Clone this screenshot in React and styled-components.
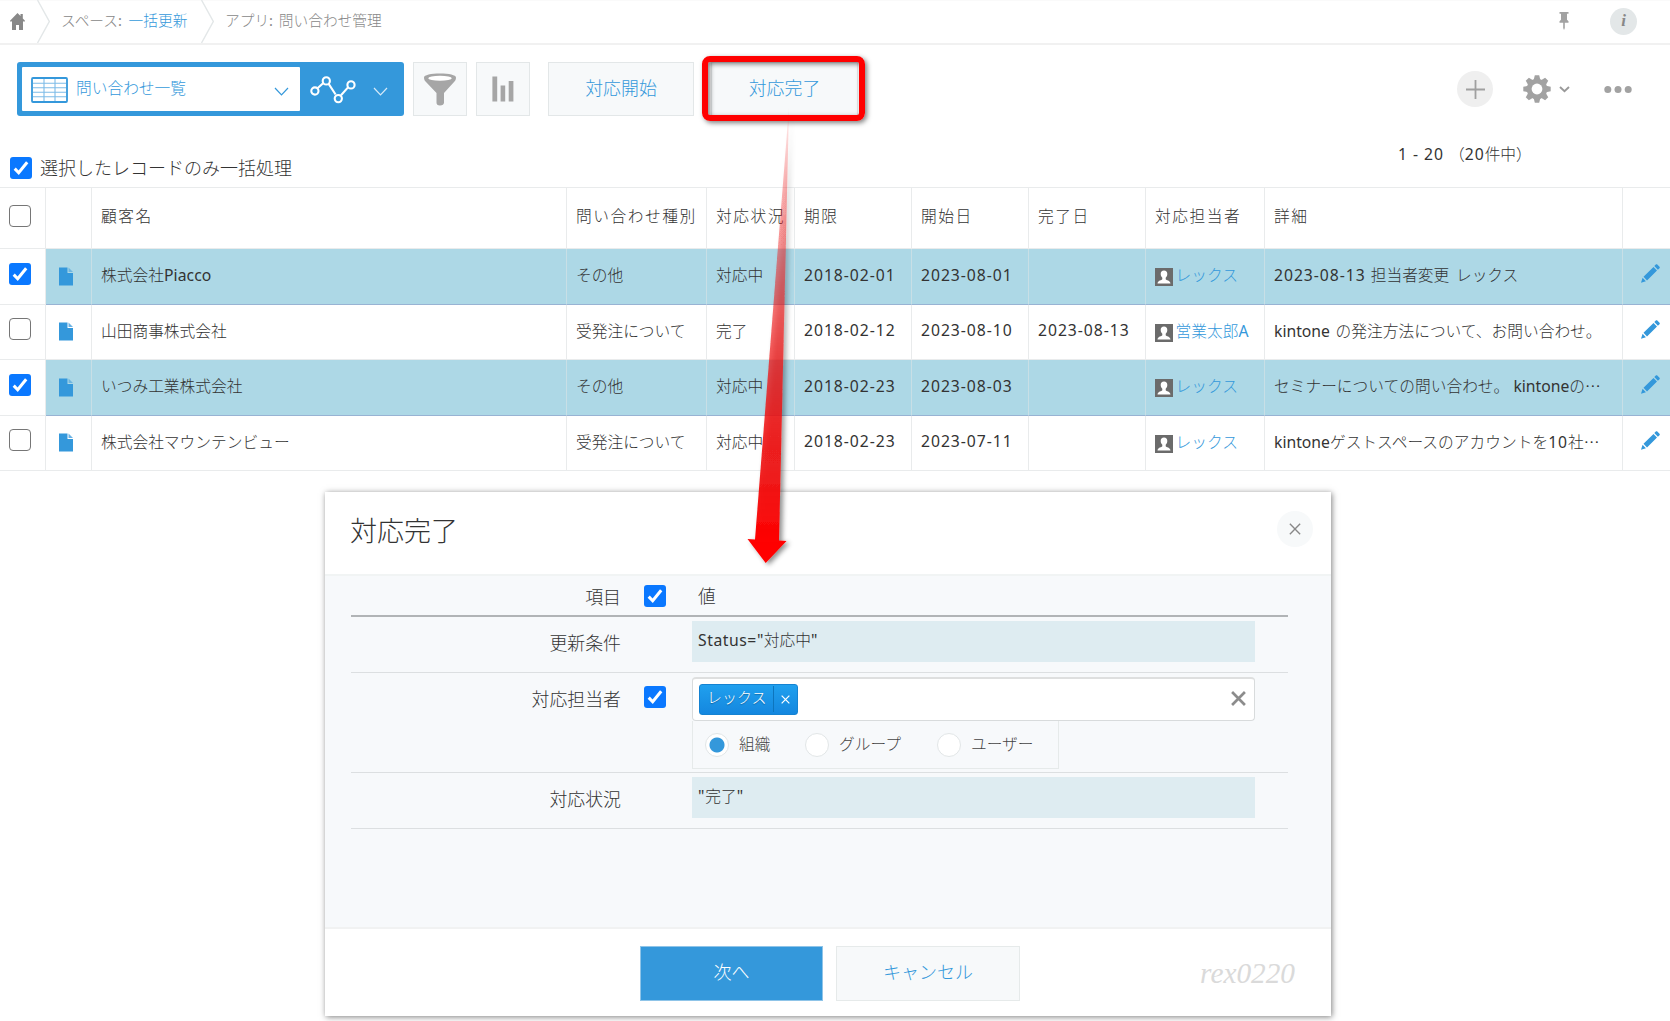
import React from "react";
import styled, { createGlobalStyle, css } from "styled-components";

const BLUE = "#3498db";
const LINE = "#e9ebec";

const GlobalStyle = createGlobalStyle`
  *, *::before, *::after { box-sizing: border-box; }
  body {
    margin: 0;
    background: #fff;
    color: #333;
    font-family: "Noto Sans", "Noto Sans CJK JP", sans-serif;
    font-size: 15.72px;
    font-weight: 300;
    overflow: hidden;
  }
  button { font: inherit; margin: 0; padding: 0; cursor: pointer; }
  svg { display: block; flex: none; }
`;

const Page = styled.div`
  position: relative;
  width: 1670px;
  height: 1021px;
  overflow: hidden;
  white-space: nowrap;
`;

const TopBar = styled.header`
  display: flex;
  align-items: center;
  justify-content: space-between;
  height: 45px;
  padding: 0 33px 2px 10px;
  border-top: 1px solid #fafafa;
  border-bottom: 2px solid #f1f1f1;
`;
const Crumbs = styled.nav`
  display: flex;
  align-items: center;
  height: 42px;
  color: #888;
  font-size: 14.7px;
`;
const Crumb = styled.span`
  width: ${(p) => p.$w}px;
  padding-left: ${(p) => p.$pad}px;
  padding-bottom: 4px;
`;
const CrumbLink = styled.a`
  color: ${BLUE};
`;
const TopIcons = styled.div`
  display: flex;
  align-items: center;
  gap: 41px;
`;
const InfoBadge = styled.span`
  width: 27px;
  height: 27px;
  border-radius: 50%;
  background: #e3e7e8;
  color: #888;
  font: italic bold 17px/25px "Liberation Serif", serif;
  text-align: center;
`;

const Toolbar = styled.div`
  display: flex;
  align-items: flex-start;
  height: 89px;
  padding: 17px 37px 0 17px;
`;
const ViewSelector = styled.div`
  display: flex;
  width: 387px;
  height: 54px;
  padding: 5px;
  border-radius: 3px;
  background: ${BLUE};
`;
const ViewName = styled.div`
  display: flex;
  align-items: center;
  width: 278px;
  padding: 0 11px 0 9px;
  background: #fff;
  color: ${BLUE};
  border-radius: 1px;
  span { flex: 1; margin-left: 8px; padding-bottom: 3px; }
  svg:first-child { margin-top: 2px; }
  svg:last-child { margin-top: 4px; }
`;
const GraphPicker = styled.div`
  display: flex;
  align-items: center;
  justify-content: space-between;
  flex: 1;
  padding: 2px 11px 0 10px;
  svg:last-child { margin-top: 2px; }
`;
const ToolButton = styled.button`
  display: flex;
  align-items: center;
  justify-content: center;
  width: ${(p) => p.$w}px;
  height: 54px;
  margin-left: ${(p) => p.$gap}px;
  padding-bottom: ${(p) => (p.$text ? 5 : 0)}px;
  background: #f7f9fa;
  border: 1px solid #e3e7e8;
  color: ${BLUE};
  font-size: 17.9px;
`;
const ToolRight = styled.div`
  display: flex;
  align-items: center;
  height: 54px;
  margin-left: auto;
`;
const AddButton = styled.button`
  display: flex;
  align-items: center;
  justify-content: center;
  width: 36px;
  height: 36px;
  margin-right: 30px;
  border: 0;
  border-radius: 50%;
  background: #efefef;
`;
const MoreButton = styled.span`
  margin-left: 14px;
`;

const ListHead = styled.div`
  display: flex;
  justify-content: space-between;
  height: 53px;
  padding: 0 144px 0 10px;
`;
const SelectOnly = styled.label`
  display: flex;
  align-items: center;
  gap: 8px;
  height: 26px;
  margin-top: 21px;
  font-size: 18px;
  & > b { font-weight: 300; padding-bottom: 2px; }
`;
const Count = styled.div`
  width: 128px;
  margin-top: 9px;
  line-height: 22px;
`;
const Latin = styled.span`
  font-weight: 400;
  letter-spacing: ${(p) => p.$ls ?? 0}px;
`;
const Dots = styled.span`
  font-family: "Noto Sans CJK JP", sans-serif;
  line-height: 1;
`;

const Box = styled.span`
  display: flex;
  align-items: center;
  justify-content: center;
  flex: none;
  width: 22px;
  height: 22px;
  border-radius: 3px;
  background: #0a78ff;
  ${(p) => !p.$on && css`
    background: #fff;
    border: 1.5px solid #767676;
    border-radius: 4px;
  `}
`;

const rowGrid = css`
  display: grid;
  grid-template-columns: 46px 46px 475px 140px 88px 117px 117px 117px 119px 358px 47px;
`;
const Grid = styled.section`
  border-top: 1px solid ${LINE};
`;
const HeadRow = styled.div`
  ${rowGrid}
  height: 61px;
`;
const Row = styled.div`
  ${rowGrid}
  height: 55.5px;
`;
const Cell = styled.div`
  display: flex;
  align-items: center;
  min-width: 0;
  padding: 0 0 3px 9px;
  border-right: 1px solid ${LINE};
  border-bottom: 1px solid ${LINE};
  &:last-child { border-right: 0; }
  ${(p) => p.$on && css`
    background: #add8e6;
    border-right-color: #c8dfe6;
    border-bottom-color: #98b3d3;
  `}
  ${(p) => p.$head && css`letter-spacing: 1.55px; padding-bottom: 6px;`}
  ${(p) => p.$icon && css`justify-content: center; padding: 0 6px 0 0;`}
  ${(p) => p.$check && css`padding-bottom: 5px;`}
  ${(p) => p.$edit && css`padding: 0 0 5px 7px;`}
`;
const UserLink = styled.a`
  display: flex;
  align-items: center;
  gap: 3px;
  color: ${BLUE};
  svg { margin: 5px 0 0 -0.5px; }
`;

const Dialog = styled.section`
  position: absolute;
  left: 325px;
  top: 492px;
  width: 1006px;
  height: 524px;
  background: #fff;
  box-shadow: 1px 1px 6px rgba(0, 0, 0, 0.5);
`;
const DialogHead = styled.div`
  display: flex;
  justify-content: space-between;
  align-items: center;
  height: 82px;
  padding: 0 18px 8px 25px;
`;
const Title = styled.h2`
  margin: 0;
  font-size: 27px;
  font-weight: 300;
`;
const CloseButton = styled.button`
  display: flex;
  align-items: center;
  justify-content: center;
  width: 36px;
  height: 36px;
  border: 0;
  border-radius: 50%;
  background: #f7f9fa;
`;
const DialogBody = styled.div`
  height: 355px;
  padding: 0 43px 0 26px;
  background: #f7f9fb;
  border-top: 2px solid #f1f4f4;
  border-bottom: 2px solid #f1f2f2;
`;
const Field = styled.div`
  display: grid;
  grid-template-columns: 270px 71px 563px;
  height: ${(p) => p.$h}px;
  border-bottom: ${(p) => (p.$strong ? "2px solid #b1b4b6" : "1px solid #dcdfe1")};
`;
const FieldLabel = styled.div`
  height: 26px;
  margin-top: ${(p) => p.$top}px;
  font-size: 17.9px;
  line-height: 26px;
  text-align: right;
`;
const FieldCheck = styled.div`
  padding: ${(p) => p.$top}px 0 0 23px;
`;
const FieldValue = styled.div`
  padding-top: ${(p) => p.$top}px;
`;
const ReadOnly = styled.div`
  height: 41px;
  padding: 0 6px;
  background: #deecf1;
  line-height: 39px;
`;
const ValueHead = styled.div`
  padding-left: 6px;
  font-size: 17.7px;
  line-height: 26px;
`;
const TagInput = styled.div`
  display: flex;
  align-items: flex-start;
  justify-content: space-between;
  height: 44px;
  padding: 5px 8px 0 6px;
  border: 1px solid #d8dbdc;
  border-top: 2px solid #dedfdf;
  border-radius: 4px;
  background: #fff;
  & > svg { margin-top: 7px; }
`;
const Tag = styled.span`
  display: flex;
  align-items: stretch;
  width: 99px;
  height: 31px;
  border: 1px solid #1583d2;
  border-radius: 3px;
  background: linear-gradient(#20a0ee, #1487df);
  color: #fff;
  line-height: 25px;
  text-shadow: 0 1px 1px rgba(0, 0, 0, 0.3);
`;
const TagName = styled.span`
  width: 73px;
  padding-left: 7px;
  font-size: 15px;
`;
const TagRemove = styled.span`
  display: flex;
  flex: 1;
  align-items: center;
  justify-content: center;
  margin: 1px 0 2px;
  border-left: 1px solid #0d75bd;
`;
const RadioPanel = styled.div`
  display: flex;
  align-items: center;
  width: 367px;
  height: 48px;
  padding-left: 12px;
  border: 1px solid #e6eaea;
  border-top: 0;
`;
const RadioItem = styled.label`
  display: flex;
  align-items: center;
  gap: 10px;
  width: ${(p) => p.$w}px;
  color: #444;
  span { padding-bottom: 3px; }
`;
const Dot = styled.i`
  width: 24px;
  height: 24px;
  border: 1px solid #e2e6e7;
  border-radius: 50%;
  background: ${(p) => (p.$on ? `radial-gradient(circle, ${BLUE} 7px, #fff 8px)` : "#fff")};
`;
const DialogFoot = styled.div`
  display: flex;
  align-items: flex-start;
  height: 87px;
  padding: 17px 36px 0 315px;
`;
const FootButton = styled.button`
  width: ${(p) => p.$w}px;
  height: 55px;
  margin-right: 13px;
  padding-bottom: 5px;
  border: 1px solid ${(p) => (p.$primary ? "#8fc4e8" : "#e6eaea")};
  background: ${(p) => (p.$primary ? BLUE : "#f7f9fa")};
  color: ${(p) => (p.$primary ? "#fff" : BLUE)};
  font-size: 18px;
`;
const Signature = styled.span`
  margin-left: auto;
  padding-top: 10px;
  color: #dadada;
  font: italic 29.3px/34px "Liberation Serif", serif;
`;

const Callout = styled.div`
  position: absolute;
  left: 702px;
  top: 56px;
  width: 163px;
  height: 65px;
  border: 6px solid #f00;
  border-radius: 8px;
  box-shadow: 2px 2px 5px rgba(0, 0, 0, 0.5), inset 2px 2px 5px rgba(0, 0, 0, 0.5);
`;
const ArrowLayer = styled.svg`
  position: absolute;
  left: 735px;
  top: 95px;
`;

const Check = ({ on }) => (
  <Box $on={on}>
    {on && (
      <svg width="18" height="18" viewBox="0 0 18 18">
        <path d="M2.7 9.6 6.7 13.8 15.2 3.2" fill="none" stroke="#fff" strokeWidth="3" />
      </svg>
    )}
  </Box>
);
const Chevron = ({ color }) => (
  <svg width="15" height="9" viewBox="0 0 15 9">
    <path d="M1 1 7.5 7.8 14 1" fill="none" stroke={color} strokeWidth="1.2" />
  </svg>
);
const Separator = () => (
  <svg width="13" height="43" viewBox="0 0 13 43">
    <path d="M.5 0 12.3 21.5.5 43" fill="none" stroke="#e3e7e8" strokeWidth="1.4" />
  </svg>
);
const Cross = ({ size, width, color }) => (
  <svg width={size} height={size} viewBox="0 0 14 14">
    <path d="M1 1 13 13M13 1 1 13" stroke={color} strokeWidth={width} />
  </svg>
);
const HomeIcon = () => (
  <svg width="15" height="17" viewBox="0 0 15 17">
    <path d="M7.5 0 0 7.8.9 9 2 8v9h4v-5h3v5h4V8l1.1 1 .9-1.2-2.2-2.3V1h-2.3v2.1z" fill="#888" />
  </svg>
);
const PinIcon = () => (
  <svg width="10" height="18" viewBox="0 0 10 18">
    <path d="M.5 0h9v1.7H8v6l1.500 1.600v1.400H5.800V16L5 18l-.8-2v-5.300H.5V9.300L2 7.700v-6H.5z" fill="#a2a2a2" />
  </svg>
);
const ListIcon = () => (
  <svg width="37" height="26" viewBox="0 0 37 26">
    <rect x="1" y="1" width="35" height="24" rx="1" fill="#fff" stroke={BLUE} strokeWidth="1.8" />
    <path d="M2 6.2h33M2 10.7h33M2 15.2h33M2 19.7h33M13 2v22M24 2v22" stroke="#7dbce8" strokeWidth="1.1" />
  </svg>
);
const GraphIcon = () => (
  <svg width="46" height="28" viewBox="0 0 46 28">
    <g fill="none" stroke="#fff" strokeWidth="2.1">
      <path d="m7.500 12.300 5.600-5M18.500 7.600l7.100 10.900M31 19.200l7-7.800" />
      <circle cx="4.900" cy="15" r="3.600" />
      <circle cx="16.300" cy="4.900" r="3.600" />
      <circle cx="28.300" cy="22.600" r="3.600" />
      <circle cx="41" cy="8.900" r="3.600" />
    </g>
  </svg>
);
const FilterIcon = () => (
  <svg width="32" height="33" viewBox="0 0 32 33">
    <path d="M0 4.500C0 2 7 .5 16 .5s16 1.500 16 4c0 1.500-.4 2.800-1.300 3.700L20 20v9.500c0 1.800-1.500 3-4 3s-3.500-1.200-3.500-3V20L1.300 8.200C.4 7.300 0 6 0 4.500z" fill="#a6a6a6" />
    <ellipse cx="16" cy="5.200" rx="11.800" ry="2.500" fill="#fff" />
  </svg>
);
const BarsIcon = () => (
  <svg width="22" height="26" viewBox="0 0 22 26">
    <path d="M.4 .5h4.800v25H.4zM8.600 9.500h4.600v16H8.600zM16.700 4.900h4.700v20.600h-4.700z" fill="#a6a6a6" />
  </svg>
);
const GearIcon = () => (
  <svg width="28" height="28" viewBox="-14 -14 28 28">
    <g fill="#a2a2a2">
      {[0, 45, 90, 135, 180, 225, 270, 315].map((a) => (
        <path key={a} d="M-3.600 -8 -2.200 -13.700h4.400L3.600 -8z" transform={`rotate(${a})`} />
      ))}
      <circle r="10.300" />
    </g>
    <circle r="5.400" fill="#fff" />
  </svg>
);
const FileIcon = ({ on }) => (
  <svg width="14" height="19" viewBox="0 0 14 19">
    <path d="M0 .5h8.500V6H14v12.500H0z" fill={BLUE} />
    <path d="M9.500 .5 14 5H9.500z" fill={on ? "#6fb6df" : "#6bb2e4"} />
  </svg>
);
const UserIcon = () => (
  <svg width="18" height="18" viewBox="0 0 18 18">
    <rect width="18" height="18" fill="#6b6b6b" />
    <path d="M9 2.500c2.200 0 3.300 1.500 3.300 3.500 0 1.700-.8 3-1.600 3.800v1.500c.3 1 4.600 1.200 4.800 4.200h-13c.2-3 4.500-3.200 4.800-4.200V9.800C6.500 9 5.700 7.700 5.700 6c0-2 1.100-3.500 3.300-3.500z" fill="#fff" />
  </svg>
);
const PencilIcon = () => (
  <svg width="19" height="19" viewBox="0 0 19 19">
    <path d="M0 18.700 1.600 13.800 4.900 17.200zM2.500 12.700 12.500 2.900l3.500 3.600-10 9.900zM13.300 2 14.800.5c.5-.5 1-.5 1.500 0l2.200 2.300c.5.500.5 1 0 1.500L16.900 5.700z" fill={BLUE} />
  </svg>
);

const D = ({ children }) => <Latin $ls={0.96}>{children}</Latin>;
const L = ({ children }) => <Latin>{children}</Latin>;

const headers = ["顧客名", "問い合わせ種別", "対応状況", "期限", "開始日", "完了日", "対応担当者", "詳細"];
const records = [
  { id: 1, on: true, name: <>株式会社<Latin $ls={0.1}>Piacco</Latin></>, kind: "その他", status: "対応中", due: "2018-02-01", start: "2023-08-01", end: "", user: "レックス", note: <><D>2023-08-13 </D>担当者変更<D> </D>&#8202;レックス</> },
  { id: 2, on: false, name: "山田商事株式会社", kind: "受発注について", status: "完了", due: "2018-02-12", start: "2023-08-10", end: "2023-08-13", user: <span>営業太郎<L>A</L></span>, note: <><L>kintone </L>&#8202;の発注方法について、お問い合わせ。</> },
  { id: 3, on: true, name: "いつみ工業株式会社", kind: "その他", status: "対応中", due: "2018-02-23", start: "2023-08-03", end: "", user: "レックス", note: <>セミナーについての問い合わせ。 <L>kintone</L>の<Dots>…</Dots></> },
  { id: 4, on: false, name: "株式会社マウンテンビュー", kind: "受発注について", status: "対応中", due: "2018-02-23", start: "2023-07-11", end: "", user: "レックス", note: <><L>kintone</L>ゲストスペースのアカウントを<D>10</D>社<Dots>…</Dots></> },
];

export default function App() {
  return (
    <Page>
      <GlobalStyle />
      <TopBar>
        <Crumbs>
          <HomeIcon />
          <Crumb $w={12} $pad={0} />
          <Separator />
          <Crumb $w={151} $pad={11}>
            スペース<Latin $ls={1.4}>: </Latin><CrumbLink>一括更新</CrumbLink>
          </Crumb>
          <Separator />
          <Crumb $w={180} $pad={11}>アプリ<Latin $ls={1}>: </Latin>問い合わせ管理</Crumb>
        </Crumbs>
        <TopIcons>
          <PinIcon />
          <InfoBadge>i</InfoBadge>
        </TopIcons>
      </TopBar>

      <Toolbar>
        <ViewSelector>
          <ViewName>
            <ListIcon />
            <span>問い合わせ一覧</span>
            <Chevron color={BLUE} />
          </ViewName>
          <GraphPicker>
            <GraphIcon />
            <Chevron color="#d6eaf8" />
          </GraphPicker>
        </ViewSelector>
        <ToolButton $w={54} $gap={9}><FilterIcon /></ToolButton>
        <ToolButton $w={54} $gap={9}><BarsIcon /></ToolButton>
        <ToolButton $w={146} $gap={18} $text>対応開始</ToolButton>
        <ToolButton $w={147} $gap={17} $text>対応完了</ToolButton>
        <ToolRight>
          <AddButton>
            <svg width="19" height="19" viewBox="0 0 19 19">
              <path d="M9.500 0v19M0 9.500h19" stroke="#a0a0a0" strokeWidth="1.800" />
            </svg>
          </AddButton>
          <GearIcon />
          <svg width="28" height="12" viewBox="0 0 28 12">
            <path d="M9 4l4.500 4.300L18 4" fill="none" stroke="#999" strokeWidth="1.900" />
          </svg>
          <MoreButton>
            <svg width="40" height="12" viewBox="0 0 40 12">
              <g fill="#a2a2a2">
                <circle cx="14.800" cy="6.500" r="3.500" />
                <circle cx="25" cy="6.500" r="3.500" />
                <circle cx="35.200" cy="6.500" r="3.500" />
              </g>
            </svg>
          </MoreButton>
        </ToolRight>
      </Toolbar>

      <ListHead>
        <SelectOnly>
          <Check on />
          <b>選択したレコードのみ一括処理</b>
        </SelectOnly>
        <Count><D>1 - 20 </D>（<D>20</D>件中）</Count>
      </ListHead>

      <Grid>
        <HeadRow>
          <Cell $icon $check><Check /></Cell>
          <Cell />
          {headers.map((h) => <Cell key={h} $head>{h}</Cell>)}
          <Cell />
        </HeadRow>
        {records.map((r) => (
          <Row key={r.id}>
            <Cell $icon $check><Check on={r.on} /></Cell>
            <Cell $icon $on={r.on}><FileIcon on={r.on} /></Cell>
            <Cell $on={r.on}><span>{r.name}</span></Cell>
            <Cell $on={r.on}>{r.kind}</Cell>
            <Cell $on={r.on}>{r.status}</Cell>
            <Cell $on={r.on}><D>{r.due}</D></Cell>
            <Cell $on={r.on}><D>{r.start}</D></Cell>
            <Cell $on={r.on}><D>{r.end}</D></Cell>
            <Cell $on={r.on}><UserLink><UserIcon />{r.user}</UserLink></Cell>
            <Cell $on={r.on}><span>{r.note}</span></Cell>
            <Cell $icon $edit $on={r.on}><PencilIcon /></Cell>
          </Row>
        ))}
      </Grid>

      <Dialog>
        <DialogHead>
          <Title>対応完了</Title>
          <CloseButton><Cross size={12} width={1.6} color="#888" /></CloseButton>
        </DialogHead>
        <DialogBody>
          <Field $h={41} $strong>
            <FieldLabel $top={8}>項目</FieldLabel>
            <FieldCheck $top={8.5}><Check on /></FieldCheck>
            <FieldValue $top={7}><ValueHead>値</ValueHead></FieldValue>
          </Field>
          <Field $h={56}>
            <FieldLabel $top={13}>更新条件</FieldLabel>
            <FieldCheck />
            <FieldValue $top={4}><ReadOnly><Latin $ls={0.55}>Status="</Latin>対応中<Latin>"</Latin></ReadOnly></FieldValue>
          </Field>
          <Field $h={100}>
            <FieldLabel $top={13}>対応担当者</FieldLabel>
            <FieldCheck $top={13}><Check on /></FieldCheck>
            <FieldValue $top={4}>
              <TagInput>
                <Tag>
                  <TagName>レックス</TagName>
                  <TagRemove><Cross size={9} width={1.9} color="#fff" /></TagRemove>
                </Tag>
                <Cross size={15} width={2.5} color="#8c8c8c" />
              </TagInput>
              <RadioPanel>
                <RadioItem $w={100}><Dot $on /><span>組織</span></RadioItem>
                <RadioItem $w={132}><Dot /><span>グループ</span></RadioItem>
                <RadioItem $w={100}><Dot /><span>ユーザー</span></RadioItem>
              </RadioPanel>
            </FieldValue>
          </Field>
          <Field $h={56}>
            <FieldLabel $top={13}>対応状況</FieldLabel>
            <FieldCheck />
            <FieldValue $top={4}><ReadOnly><Latin $ls={0.8}>"</Latin>完了<Latin>"</Latin></ReadOnly></FieldValue>
          </Field>
        </DialogBody>
        <DialogFoot>
          <FootButton $w={183} $primary>次へ</FootButton>
          <FootButton $w={184}>キャンセル</FootButton>
          <Signature>rex0220</Signature>
        </DialogFoot>
      </Dialog>

      <Callout />
      <ArrowLayer width="70" height="485" viewBox="735 95 70 485">
        <defs>
          <linearGradient id="arrowFade" gradientUnits="userSpaceOnUse" x1="0" y1="105" x2="0" y2="545">
            <stop offset="0" stopColor="#f00000" stopOpacity="0.05" />
            <stop offset="0.170" stopColor="#f01010" stopOpacity="0.280" />
            <stop offset="0.600" stopColor="#ee1010" stopOpacity="0.730" />
            <stop offset="0.850" stopColor="#f01414" stopOpacity="0.960" />
            <stop offset="1" stopColor="#ff0000" />
          </linearGradient>
          <filter id="arrowShadow" x="-50%" y="-5%" width="200%" height="110%">
            <feDropShadow dx="3" dy="2" stdDeviation="2.500" floodColor="#000" floodOpacity="0.450" />
          </filter>
        </defs>
        <path d="M789 107 779 540.500 786.500 541 765.700 563 747.500 539 755 539.500z" fill="url(#arrowFade)" filter="url(#arrowShadow)" />
      </ArrowLayer>
    </Page>
  );
}
